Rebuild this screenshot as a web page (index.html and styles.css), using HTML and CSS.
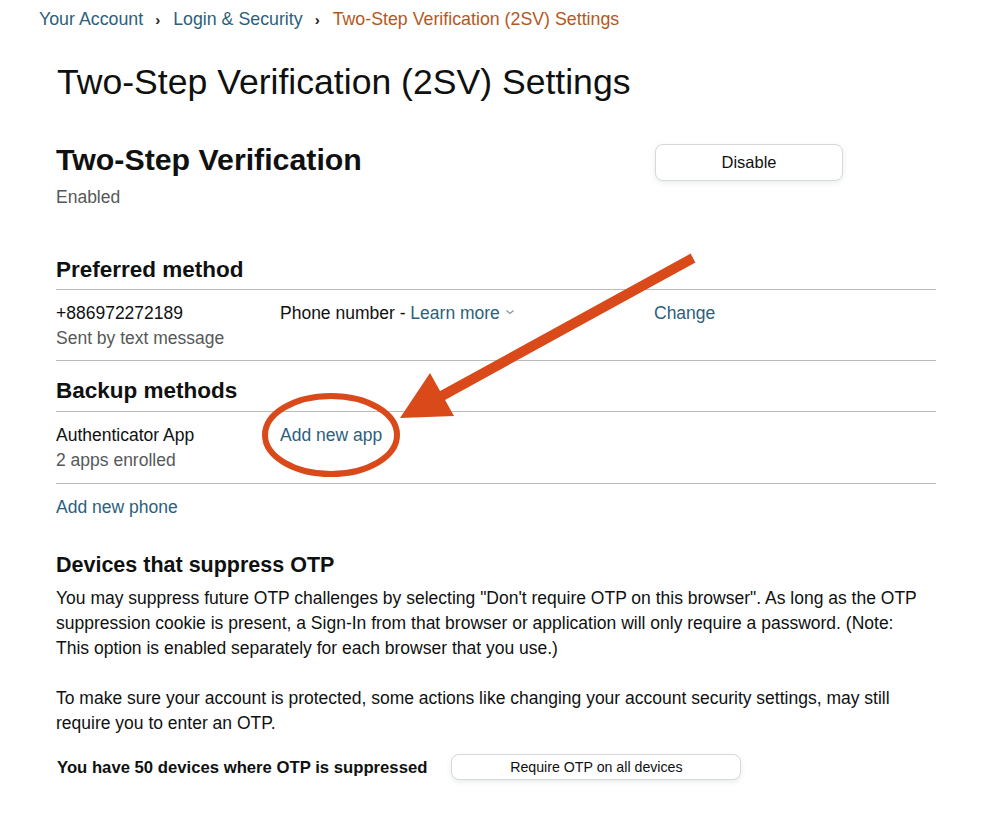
FILE: index.html
```html
<!DOCTYPE html>
<html lang="en">
<head>
<meta charset="utf-8">
<title>Two-Step Verification (2SV) Settings</title>
<link rel="stylesheet" href="styles.css">
</head>
<body>
<nav class="crumbs">
  <a class="crumb" href="#">Your Account</a>
  <span class="sep">›</span>
  <a class="crumb" href="#">Login &amp; Security</a>
  <span class="sep">›</span>
  <span class="crumb current">Two-Step Verification (2SV) Settings</span>
</nav>
<main class="page">
  <h1 class="title">Two-Step Verification (2SV) Settings</h1>

  <section class="status">
    <div>
      <h2 class="status-title">Two-Step Verification</h2>
      <div class="muted">Enabled</div>
    </div>
    <button class="btn btn-lg">Disable</button>
  </section>

  <h3 class="sub sub-first">Preferred method</h3>
  <div class="row row-first">
    <div>
      <div>+886972272189</div>
      <div class="muted">Sent by text message</div>
    </div>
    <div>Phone number - <a class="link" href="#">Learn more</a><svg class="chev" width="10" height="8" viewBox="0 0 10 8"><path d="M1.5 2.5 L5 5.5 L8.5 2.5" fill="none" stroke="#8a8f8f" stroke-width="1.2"/></svg></div>
    <div><a class="link" href="#">Change</a></div>
  </div>

  <h3 class="sub sub-gap">Backup methods</h3>
  <div class="row">
    <div>
      <div>Authenticator App</div>
      <div class="muted">2 apps enrolled</div>
    </div>
    <div><a class="link" href="#">Add new app</a></div>
    <div></div>
  </div>
  <div class="add-phone"><a class="link" href="#">Add new phone</a></div>

  <h3 class="sub plain devices">Devices that suppress OTP</h3>
  <p class="para">You may suppress future OTP challenges by selecting "Don't require OTP on this browser". As long as the OTP suppression cookie is present, a Sign-In from that browser or application will only require a password. (Note: This option is enabled separately for each browser that you use.)</p>
  <p class="para">To make sure your account is protected, some actions like changing your account security settings, may still require you to enter an OTP.</p>

  <div class="suppress">
    <strong class="suppress-text">You have 50 devices where OTP is suppressed</strong>
    <button class="btn btn-sm">Require OTP on all devices</button>
  </div>
</main>

<svg class="annot" width="985" height="816" viewBox="0 0 985 816" aria-hidden="true">
  <line x1="693" y1="258" x2="438" y2="398" stroke="#d9491a" stroke-width="10"/>
  <polygon points="400,418 430,373 454,416" fill="#d9491a"/>
  <ellipse cx="331" cy="435" rx="66" ry="39" fill="none" stroke="#d9491a" stroke-width="6"/>
</svg>
</body>
</html>
```
FILE: styles.css
```css
* { box-sizing: border-box; }
html, body { margin: 0; padding: 0; background: #fff; }
body {
  font-family: "Liberation Sans", Arial, sans-serif;
  font-size: 17.5px;
  line-height: 25px;
  color: #0f1111;
  position: relative;
  width: 985px;
  height: 816px;
  overflow: hidden;
}
a { text-decoration: none; }
.crumbs {
  padding: 7px 0 0 39px;
  display: flex;
  align-items: center;
  font-size: 17.8px;
}
.crumb { color: #2c5f7c; }
.crumb.current { color: #b5571c; }
.sep { color: #222; font-size: 15px; font-weight: bold; padding: 0 13px 0 12px; }

.page { padding: 0 49px 0 56px; }
.title {
  margin: 29px 0 0 1px;
  font-size: 35.6px;
  line-height: 42px;
  font-weight: normal;
  color: #0f1111;
}
.status {
  display: grid;
  grid-template-columns: 599px 188px;
  margin-top: 39px;
}
.status-title {
  margin: 0;
  font-size: 30.3px;
  line-height: 36px;
  font-weight: bold;
}
.muted { color: #565959; }
.status .muted { margin-top: 7px; }
.btn {
  font-family: inherit;
  color: #0f1111;
  background: #fff;
  border: 1px solid #d5d9d9;
  box-shadow: 0 2px 5px rgba(213, 217, 217, 0.5);
  cursor: pointer;
}
.btn-lg {
  height: 37px;
  margin-top: 2px;
  border-radius: 8px;
  font-size: 16.5px;
}
.btn-sm {
  width: 290px;
  height: 26px;
  border-radius: 8px;
  font-size: 14.2px;
  padding: 0;
}
.sub {
  margin: 0;
  font-size: 22.5px;
  line-height: 26px;
  font-weight: bold;
  padding-bottom: 7px;
  border-bottom: 1px solid #bbb;
}
.sub-first { margin-top: 47px; padding-bottom: 6px; }
.sub-gap { margin-top: 17px; }
.row {
  display: grid;
  grid-template-columns: 224px 374px 1fr;
  padding: 11px 0 10px;
  border-bottom: 1px solid #bbb;
}
.row-first { padding-bottom: 9px; }
.link { color: #2c5f7c; }
.chev { margin-left: 5px; vertical-align: 3px; }
.add-phone { margin-top: 11px; }
.sub.plain { border-bottom: none; padding-bottom: 0; font-size: 21.5px; }
.devices { margin-top: 32px; }
.para { margin: 8px 0 0; max-width: 868px; }
.para + .para { margin-top: 25px; }
.suppress {
  display: flex;
  align-items: center;
  gap: 24px;
  margin-top: 18px;
  padding-left: 1px;
}
.suppress-text { font-size: 16.7px; }

.annot {
  position: absolute;
  left: 0;
  top: 0;
  pointer-events: none;
}
```
